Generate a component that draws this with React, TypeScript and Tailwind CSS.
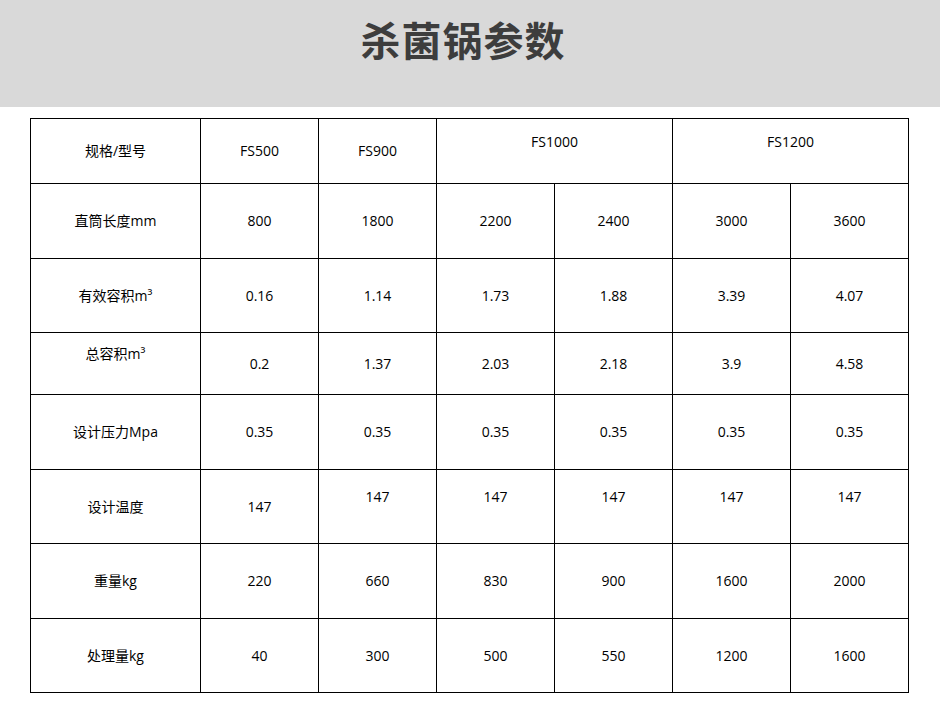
import React from "react";

const font = { fontFamily: '"Open Sans", "Noto Sans CJK SC", sans-serif' };

type Cell = { t: React.ReactNode; span?: boolean; up?: boolean };

const rows: { h: string; cells: Cell[] }[] = [
  {
    h: "h-[64px]",
    cells: [
      { t: "规格/型号" },
      { t: "FS500" },
      { t: "FS900" },
      { t: "FS1000", span: true, up: true },
      { t: "FS1200", span: true, up: true },
    ],
  },
  {
    h: "h-[74px]",
    cells: ["直筒长度mm", "800", "1800", "2200", "2400", "3000", "3600"].map((t) => ({ t })),
  },
  {
    h: "h-[73px]",
    cells: ["有效容积m³", "0.16", "1.14", "1.73", "1.88", "3.39", "4.07"].map((t) => ({ t })),
  },
  {
    h: "h-[61px]",
    cells: [
      { t: "总容积m³", up: true },
      ...["0.2", "1.37", "2.03", "2.18", "3.9", "4.58"].map((t) => ({ t })),
    ],
  },
  {
    h: "h-[74px]",
    cells: ["设计压力Mpa", "0.35", "0.35", "0.35", "0.35", "0.35", "0.35"].map((t) => ({ t })),
  },
  {
    h: "h-[73px]",
    cells: [
      { t: "设计温度" },
      { t: "147" },
      ...["147", "147", "147", "147", "147"].map((t) => ({ t, up: true })),
    ],
  },
  {
    h: "h-[74px]",
    cells: ["重量kg", "220", "660", "830", "900", "1600", "2000"].map((t) => ({ t })),
  },
  {
    h: "h-[73px]",
    cells: ["处理量kg", "40", "300", "500", "550", "1200", "1600"].map((t) => ({ t })),
  },
];

export default function App() {
  return (
    <div className="w-[940px] h-[718px] bg-white text-black" style={font}>
      <div className="h-[107px] bg-[#d9d9d9] flex items-center justify-center pb-[25px] pr-[14px]">
        <h1 className="text-[40px] font-bold text-[#3d3d3d] tracking-[1px] leading-none">杀菌锅参数</h1>
      </div>
      <div className="mt-[11px] ml-[30px] w-[879px] grid grid-cols-[169px_repeat(6,117px)] gap-px bg-black p-px text-[14px]">
        {rows.map((r, ri) =>
          r.cells.map((c, ci) => (
            <div
              key={`${ri}-${ci}`}
              className={`bg-white flex items-center justify-center ${r.h} ${c.span ? "col-span-2" : ""} ${
                c.up ? "pb-[19px]" : ""
              }`}
            >
              <span className="leading-none">{c.t}</span>
            </div>
          ))
        )}
      </div>
    </div>
  );
}
